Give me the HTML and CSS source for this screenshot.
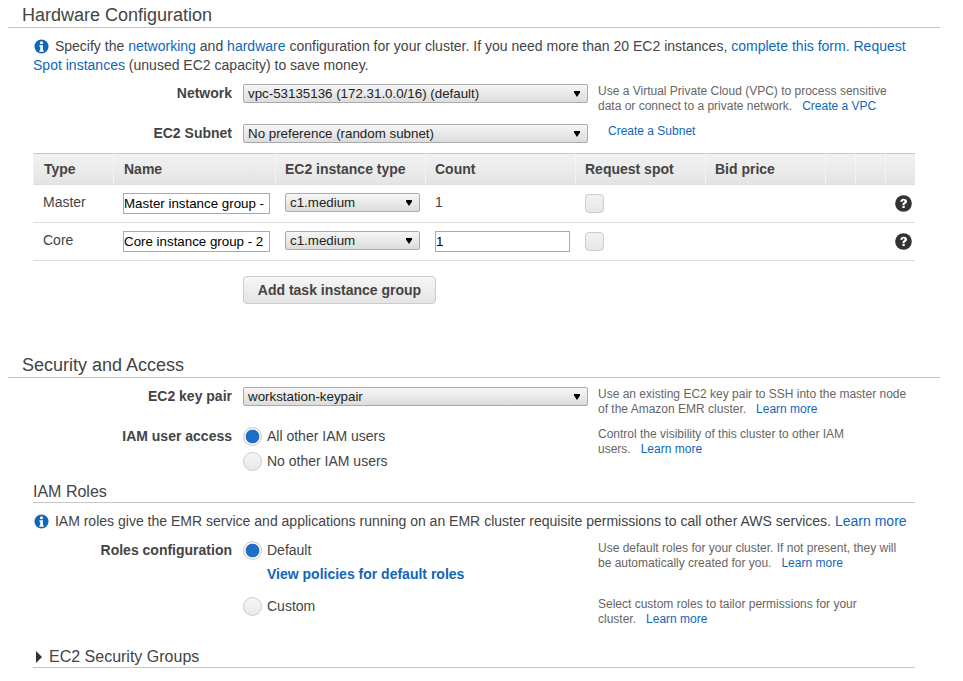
FILE: index.html
```html
<!DOCTYPE html>
<html lang="en">
<head>
    <meta charset="UTF-8">
    <meta name="viewport" content="width=device-width, initial-scale=1.0">
    <title>Hardware Configuration</title>
    <link rel="stylesheet" href="styles.css">
</head>
<body>
    <svg class="defs" width="0" height="0">
        <symbol id="info" viewBox="0 0 16 16">
            <circle cx="8" cy="8" r="7.5" fill="#1166bb"/>
            <circle cx="8" cy="4" r="1.7" fill="#fff"/>
            <path d="M5.8 6.6h3.7v5.6h1v1.5H5.6v-1.5h1v-4h-.8z" fill="#fff"/>
        </symbol>
        <symbol id="help" viewBox="0 0 18 18">
            <circle cx="9" cy="9" r="8.8" fill="#333"/>
            <path d="M5.6 7.2C5.7 5.2 7.2 4 9.2 4c2 0 3.5 1.1 3.5 2.8 0 1.3-.8 1.9-1.6 2.5-.6.4-.9.7-.9 1.4H7.9c0-1.4.4-2 1.3-2.7.6-.4.9-.7.9-1.2 0-.6-.4-.9-1-.9-.7 0-1.1.4-1.2 1.4zM7.9 11.4h2.4v2.4H7.9z" fill="#fff"/>
        </symbol>
        <symbol id="arrow" viewBox="0 0 6 6">
            <path d="M0 0h6v1.5L3 6 0 1.5z" fill="#000"/>
        </symbol>
    </svg>

    <section class="section">
        <h2 class="section-title">Hardware Configuration</h2>
        <div class="section-body">
            <p class="info info-hw">
                <svg class="info-icon"><use href="#info"/></svg>
                Specify the <a href="#">networking</a> and <a href="#">hardware</a> configuration for your cluster. If you need more than 20 EC2 instances, <a href="#">complete this form.</a> <a href="#">Request Spot instances</a> (unused EC2 capacity) to save money.
            </p>

            <div class="field field-network">
                <div class="field-label">Network</div>
                <div class="select select-wide"><span>vpc-53135136 (172.31.0.0/16) (default)</span><svg class="arrow"><use href="#arrow"/></svg></div>
                <div class="hint">Use a Virtual Private Cloud (VPC) to process sensitive data or connect to a private network. &nbsp; <a href="#">Create a VPC</a></div>
            </div>

            <div class="field field-subnet">
                <div class="field-label">EC2 Subnet</div>
                <div class="select select-wide"><span>No preference (random subnet)</span><svg class="arrow"><use href="#arrow"/></svg></div>
                <div class="hint hint-subnet"><a href="#">Create a Subnet</a></div>
            </div>

            <table class="groups">
                <thead>
                    <tr>
                        <th class="col-type">Type</th>
                        <th class="col-name">Name</th>
                        <th class="col-ec2">EC2 instance type</th>
                        <th class="col-count">Count</th>
                        <th class="col-spot">Request spot</th>
                        <th class="col-bid">Bid price</th>
                        <th class="col-x"></th>
                        <th class="col-x"></th>
                        <th class="col-x"></th>
                    </tr>
                </thead>
                <tbody>
                    <tr>
                        <td class="cell-type">Master</td>
                        <td><input class="text-input name-input" type="text" value="Master instance group - 1"></td>
                        <td><div class="select select-small"><span>c1.medium</span><svg class="arrow"><use href="#arrow"/></svg></div></td>
                        <td class="cell-count">1</td>
                        <td><div class="checkbox"></div></td>
                        <td></td>
                        <td></td>
                        <td></td>
                        <td><svg class="help-icon"><use href="#help"/></svg></td>
                    </tr>
                    <tr>
                        <td class="cell-type">Core</td>
                        <td><input class="text-input name-input" type="text" value="Core instance group - 2"></td>
                        <td><div class="select select-small"><span>c1.medium</span><svg class="arrow"><use href="#arrow"/></svg></div></td>
                        <td><input class="text-input count-input" type="text" value="1"></td>
                        <td><div class="checkbox"></div></td>
                        <td></td>
                        <td></td>
                        <td></td>
                        <td><svg class="help-icon"><use href="#help"/></svg></td>
                    </tr>
                </tbody>
            </table>

            <button class="btn" type="button">Add task instance group</button>
        </div>
    </section>

    <section class="section section-security">
        <h2 class="section-title">Security and Access</h2>
        <div class="section-body">
            <div class="field field-key">
                <div class="field-label">EC2 key pair</div>
                <div class="select select-wide"><span>workstation-keypair</span><svg class="arrow"><use href="#arrow"/></svg></div>
                <div class="hint">Use an existing EC2 key pair to SSH into the master node of the Amazon EMR cluster. &nbsp; <a href="#">Learn more</a></div>
            </div>

            <div class="field field-access">
                <div class="field-label">IAM user access</div>
                <div class="radios">
                    <div class="radio-row"><span class="radio radio-on"></span>All other IAM users</div>
                    <div class="radio-row"><span class="radio"></span>No other IAM users</div>
                </div>
                <div class="hint hint-narrow">Control the visibility of this cluster to other IAM users. &nbsp; <a href="#">Learn more</a></div>
            </div>

            <h3 class="sub-title sub-title-roles">IAM Roles</h3>
            <p class="info info-iam">
                <svg class="info-icon"><use href="#info"/></svg>
                IAM roles give the EMR service and applications running on an EMR cluster requisite permissions to call other AWS services. <a href="#">Learn more</a>
            </p>

            <div class="field field-roles">
                <div class="field-label">Roles configuration</div>
                <div class="radios">
                    <div class="radio-row"><span class="radio radio-on"></span>Default</div>
                    <a class="policy-link" href="#">View policies for default roles</a>
                </div>
                <div class="hint hint-roles">Use default roles for your cluster. If not present, they will be automatically created for you. &nbsp; <a href="#">Learn more</a></div>
            </div>

            <div class="field field-custom">
                <div class="field-label"></div>
                <div class="radios">
                    <div class="radio-row"><span class="radio"></span>Custom</div>
                </div>
                <div class="hint hint-narrow">Select custom roles to tailor permissions for your cluster. &nbsp; <a href="#">Learn more</a></div>
            </div>

            <h3 class="sub-title sub-title-toggle"><span class="caret"></span>EC2 Security Groups</h3>
        </div>
    </section>
</body>
</html>
```

FILE: styles.css
```css
body {
    font-family: "Liberation Sans", Arial, sans-serif;
    font-size: 14px;
    color: #444;
    margin: 0;
    padding: 0 23px 0 8px;
    background-color: #fff;
    overflow: hidden;
}

a {
    color: #1166bb;
    text-decoration: none;
}

.defs {
    position: absolute;
}

.section-title {
    font-size: 18px;
    font-weight: normal;
    line-height: 21px;
    margin: 0;
    padding: 5px 0 1px 14px;
    border-bottom: 1px solid #c6c6c6;
}

.section-body {
    padding: 0 25px;
}

.section-security {
    margin-top: 46px;
}

.info {
    margin: 0;
    line-height: 19px;
    font-size: 14.03px;
    padding-top: 9px;
}

.info-icon {
    width: 15px;
    height: 15px;
    vertical-align: -3px;
    margin: 0 2px 0 1px;
}

/* label, control, hint */
.field {
    display: grid;
    grid-template-columns: 200px 345px 1fr;
    column-gap: 10px;
    align-items: start;
}

.field-label {
    font-weight: bold;
    text-align: right;
    line-height: 19px;
    padding-right: 1px;
}

.field-network {
    margin-top: 9px;
}

.field-subnet {
    margin-top: 10px;
}

.field-key {
    margin-top: 9px;
}

.field-access {
    margin-top: 10px;
}

.field-roles {
    margin-top: 10px;
}

.field-custom {
    margin-top: 13px;
}

.select {
    display: flex;
    justify-content: space-between;
    align-items: center;
    height: 19px;
    box-sizing: border-box;
    padding: 0 7px 0 4px;
    font-size: 13.33px;
    color: #222;
    border: 1px solid #aaa;
    border-radius: 2px;
    background: linear-gradient(#f6f6f6, #dcdcdc);
}

.select-wide {
    width: 345px;
}

.select-small {
    width: 135px;
    margin-bottom: 2px;
}

.arrow {
    width: 6px;
    height: 6px;
}

.hint {
    font-size: 12px;
    line-height: 15px;
    color: #666;
    width: 310px;
}

.hint-subnet {
    padding-left: 10px;
}

.hint-narrow {
    width: 270px;
}

.hint-roles {
    width: 302px;
}

.groups {
    width: 882px;
    margin-top: 10px;
    border-collapse: separate;
    border-spacing: 0;
    table-layout: fixed;
}

.groups th {
    height: 32px;
    padding: 0 0 0 9px;
    text-align: left;
    font-size: 14px;
    background: linear-gradient(#f2f2f2, #e4e4e4);
    border-top: 1px solid #c6c6c6;
    border-bottom: 1px solid #ddd;
    border-left: 1px solid #f4f4f4;
    box-sizing: border-box;
}

.groups .col-type,
.groups .col-name {
    padding-left: 10px;
}

.groups td {
    height: 38px;
    padding: 0 0 0 10px;
    border-bottom: 1px solid #ddd;
    box-sizing: border-box;
}

.col-type { width: 80px; }
.col-name { width: 162px; }
.col-ec2 { width: 150px; }
.col-count { width: 150px; }
.col-spot { width: 130px; }
.col-bid { width: 120px; }
.col-x { width: 30px; }

.groups .cell-type {
    padding-bottom: 4px;
}

.groups .cell-count {
    padding-bottom: 4px;
}

.text-input {
    font-family: "Liberation Sans", Arial, sans-serif;
    font-size: 13.33px;
    color: #000;
    height: 21px;
    box-sizing: border-box;
    padding: 1px 1px 1px 0;
    border: 1px solid #aaa;
    border-radius: 0;
    display: block;
}

.name-input {
    width: 147px;
}

.count-input {
    width: 135px;
}

.checkbox {
    width: 19px;
    height: 19px;
    margin-bottom: 1px;
    box-sizing: border-box;
    border: 1px solid #ccc;
    border-radius: 4px;
    background: linear-gradient(#f2f2f2, #e6e6e6);
}

.help-icon {
    display: block;
    width: 17px;
    height: 17px;
}

.btn {
    display: block;
    width: 193px;
    height: 28px;
    margin: 15px 0 0 210px;
    padding: 0;
    font-family: "Liberation Sans", Arial, sans-serif;
    font-size: 14px;
    font-weight: bold;
    color: #444;
    border: 1px solid #ccc;
    border-radius: 4px;
    background: linear-gradient(#f6f6f6, #e4e4e4);
}

.radio-row {
    display: flex;
    align-items: center;
    gap: 5px;
    height: 19px;
    line-height: 19px;
    margin-bottom: 6px;
}

.radio {
    width: 19px;
    height: 19px;
    box-sizing: border-box;
    border: 1px solid #ccc;
    border-radius: 50%;
    background: linear-gradient(#f6f6f6, #e8e8e8);
}

.radio-on {
    background: radial-gradient(circle, #1f6fc8 0, #1f6fc8 6.5px, #f4f4f4 7.2px);
}

.policy-link {
    display: block;
    font-weight: bold;
    margin: -1px 0 0 24px;
    line-height: 19px;
}

.sub-title {
    font-size: 16px;
    font-weight: normal;
    line-height: 19px;
    margin: 0;
    padding-bottom: 1px;
    border-bottom: 1px solid #c6c6c6;
}

.sub-title-roles {
    margin-top: 5px;
}

.sub-title-toggle {
    margin-top: 20px;
}

.caret {
    display: inline-block;
    width: 0;
    height: 0;
    margin: 0 7px 0 3px;
    border-left: 6px solid #333;
    border-top: 6px solid transparent;
    border-bottom: 6px solid transparent;
    vertical-align: -1px;
}
```
